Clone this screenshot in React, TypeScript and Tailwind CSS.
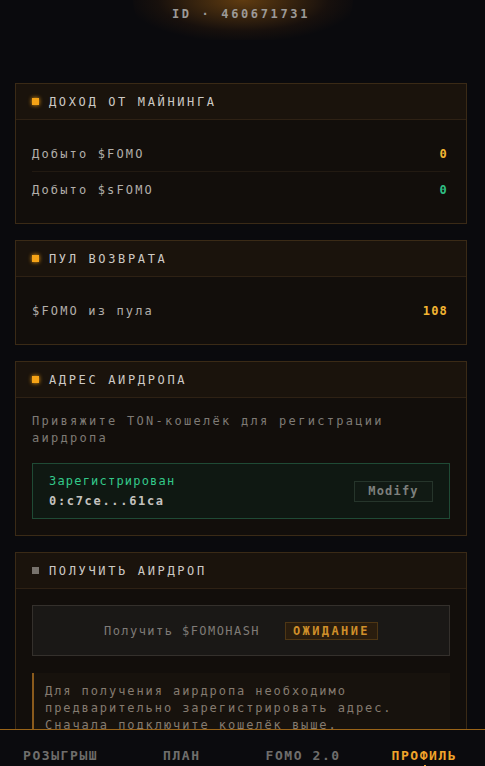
import React from 'react';

const mono = { fontFamily: '"DejaVu Sans Mono", "Liberation Mono", monospace' };

const CardHeader: React.FC<{ title: string; dim?: boolean }> = ({ title, dim }) => (
    <div className="h-[36px] flex items-center gap-[10px] px-4 bg-[#1a130c] border-b border-[#2e2114]">
        <span className={`w-[7px] h-[7px] ${dim ? 'bg-[#77726c]' : 'bg-[#f5a316] shadow-[0_0_4px_#f5a316]'}`} />
        <span className="text-[12px] tracking-[0.22em] text-[#cdc9c4]">{title}</span>
    </div>
);

const Row: React.FC<{ label: string; value: string; color: string; last?: boolean }> = ({ label, value, color, last }) => (
    <div className={`flex items-center justify-between ${last ? 'h-[35px]' : 'h-[36px] border-b border-[#221a12]'}`}>
        <span className="text-[12px] tracking-[0.18em] text-[#b3afaa]">{label}</span>
        <span className={`text-[12px] font-bold tracking-[0.1em] pr-[2px] ${color}`}>{value}</span>
    </div>
);

const App: React.FC = () => {
    return (
        <div className="min-h-screen bg-[#0a0a0d] relative overflow-hidden" style={mono}>
            {/* glow */}
            <div className="absolute left-1/2 -translate-x-1/2 -top-[40px] w-[220px] h-[80px] rounded-full bg-[radial-gradient(ellipse_at_center,rgba(200,120,20,0.45),rgba(120,60,10,0.12)_55%,transparent_75%)]" />

            <div className="relative pl-[15px] pr-[18px] pb-[120px]">
                <div className="pt-[5px] h-[83px] text-center text-[12px] tracking-[0.22em] text-[#9c9a98] font-bold">
                    ID · 460671731
                </div>

                <div className="flex flex-col gap-4">
                    <div className="border border-[#3a2a16] bg-[#120e0b]">
                        <CardHeader title="ДОХОД ОТ МАЙНИНГА" />
                        <div className="px-4 py-4">
                            <Row label="Добыто $FOMO" value="0" color="text-[#f2b533]" />
                            <Row label="Добыто $sFOMO" value="0" color="text-[#2fbf84]" last />
                        </div>
                    </div>

                    <div className="border border-[#3a2a16] bg-[#120e0b]">
                        <CardHeader title="ПУЛ ВОЗВРАТА" />
                        <div className="px-4 py-4">
                            <Row label="$FOMO из пула" value="108" color="text-[#f2b533]" last />
                        </div>
                    </div>

                    <div className="border border-[#3a2a16] bg-[#120e0b]">
                        <CardHeader title="АДРЕС АИРДРОПА" />
                        <div className="px-4 pt-[15px] pb-[16px]">
                            <p className="text-[12px] leading-[17px] tracking-[0.19em] text-[#7e7a75]">
                                Привяжите TON-кошелёк для регистрации аирдропа
                            </p>
                            <div className="mt-[16px] h-[56px] border border-[#1f4a35] bg-[#0f1812] flex items-center justify-between px-4">
                                <div className="flex flex-col gap-[2px]">
                                    <span className="text-[12px] tracking-[0.1em] text-[#33c98a]">Зарегистрирован</span>
                                    <span className="text-[12px] tracking-[0.14em] text-[#c4c2bf] font-bold">0:c7ce...61ca</span>
                                </div>
                                <button className="w-[79px] h-[21px] border border-[#26352b] bg-[#111a14] text-[12px] tracking-[0.1em] text-[#7d807d] font-bold">
                                    Modify
                                </button>
                            </div>
                        </div>
                    </div>

                    <div className="border border-[#3a2a16] bg-[#120e0b]">
                        <CardHeader title="ПОЛУЧИТЬ АИРДРОП" dim />
                        <div className="px-4 pt-4 pb-4">
                            <div className="h-[51px] border border-[#34302c] bg-[#1a1816] flex items-center justify-center gap-[25px]">
                                <span className="text-[12px] tracking-[0.12em] text-[#7f7b77]">Получить $FOMOHASH</span>
                                <span className="px-[7px] h-[18px] flex items-center border border-[#4e3614] bg-[#2a1d0e] text-[12px] tracking-[0.2em] font-bold text-[#cf8f2a]">
                                    ОЖИДАНИЕ
                                </span>
                            </div>
                            <div className="mt-[17px] border-l-2 border-[#8a5a1c] bg-[#17120d] px-[11px] py-[10px]">
                                <p className="text-[12px] leading-[17px] tracking-[0.16em] text-[#857b70]">
                                    Для получения аирдропа необходимо предварительно зарегистрировать адрес. Сначала подключите кошелёк выше.
                                </p>
                            </div>
                        </div>
                    </div>
                </div>
            </div>

            {/* bottom nav */}
            <nav className="fixed bottom-0 left-0 right-0 h-[37px] bg-[#0b0b0e] border-t border-[#9a6418] grid grid-cols-4 text-center pt-[18px]">
                <span className="text-[13px] leading-[16px] font-bold tracking-[0.12em] text-[#6f6e6c]">РОЗЫГРЫШ</span>
                <span className="text-[13px] leading-[16px] font-bold tracking-[0.12em] text-[#6f6e6c]">ПЛАН</span>
                <span className="text-[13px] leading-[16px] font-bold tracking-[0.12em] text-[#6f6e6c]">FOMO 2.0</span>
                <span className="relative text-[13px] leading-[16px] font-bold tracking-[0.12em] text-[#f0a42a]">
                    ПРОФИЛЬ
                    <span className="absolute left-1/2 top-[17px] w-[2px] h-[2px] bg-[#f0a42a]" />
                </span>
            </nav>
        </div>
    );
};

export default App;
